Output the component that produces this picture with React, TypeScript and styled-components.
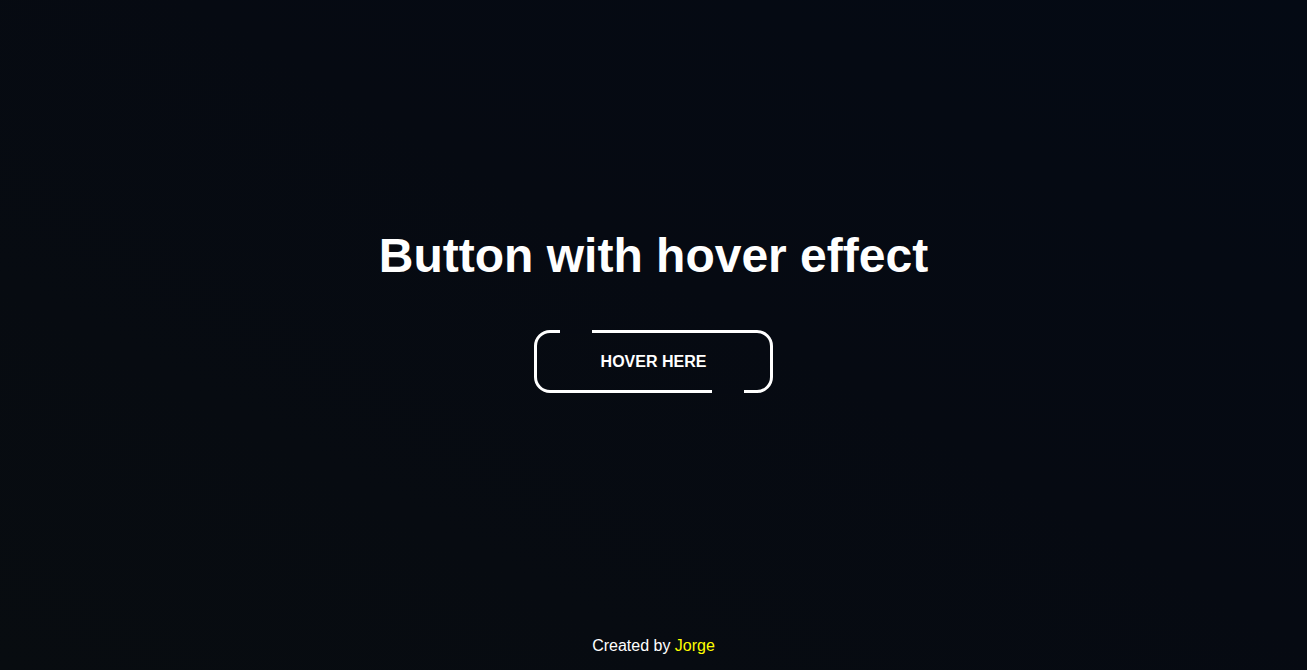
import React from "react";
import styled, { createGlobalStyle } from "styled-components";

const GlobalStyle = createGlobalStyle`
  html, body {
    margin: 0;
    padding: 0;
    height: 100%;
  }
  body {
    font-family: "Liberation Sans", Arial, sans-serif;
    background: linear-gradient(210deg, #040a14 0%, #060a12 45%, #080c10 100%);
    color: #ffffff;
  }
  #root {
    height: 100%;
  }
`;

const Page = styled.div`
  height: 100vh;
  display: flex;
  flex-direction: column;
`;

const Main = styled.main`
  flex: 1;
  display: flex;
  flex-direction: column;
  align-items: center;
  justify-content: center;
  gap: 47px;
  padding-bottom: 17px;
`;

const Title = styled.h1`
  margin: 0;
  font-family: "Liberation Sans", Arial, sans-serif;
  font-size: 48px;
  font-weight: 700;
  color: #ffffff;
`;

const HoverButton = styled.button`
  position: relative;
  box-sizing: border-box;
  width: 239px;
  height: 63px;
  border: 3px solid #ffffff;
  border-radius: 16px;
  background: transparent;
  color: #ffffff;
  font-family: "Liberation Sans", Arial, sans-serif;
  font-size: 16px;
  font-weight: 700;
  text-transform: uppercase;
  cursor: pointer;
  display: flex;
  align-items: center;
  justify-content: center;
  padding: 2px 0 0;

  &::before,
  &::after {
    content: "";
    position: absolute;
    width: 32px;
    height: 3px;
    background: #060a12;
    transition: all 0.4s ease;
  }

  &::before {
    top: -3px;
    left: 23px;
  }

  &::after {
    bottom: -3px;
    right: 26px;
  }

  &:hover::before,
  &:hover::after {
    width: 0;
  }
`;

const Footer = styled.footer`
  display: flex;
  justify-content: center;
  padding-bottom: 15px;
  font-family: "Liberation Sans", Arial, sans-serif;
  font-size: 16px;
  color: #ffffff;
`;

const Author = styled.span`
  color: #ffff00;
`;

export default function App() {
  return (
    <>
      <GlobalStyle />
      <Page>
        <Main>
          <Title>Button with hover effect</Title>
          <HoverButton>Hover here</HoverButton>
        </Main>
        <Footer>
          <span>
            Created by <Author>Jorge</Author>
          </span>
        </Footer>
      </Page>
    </>
  );
}
